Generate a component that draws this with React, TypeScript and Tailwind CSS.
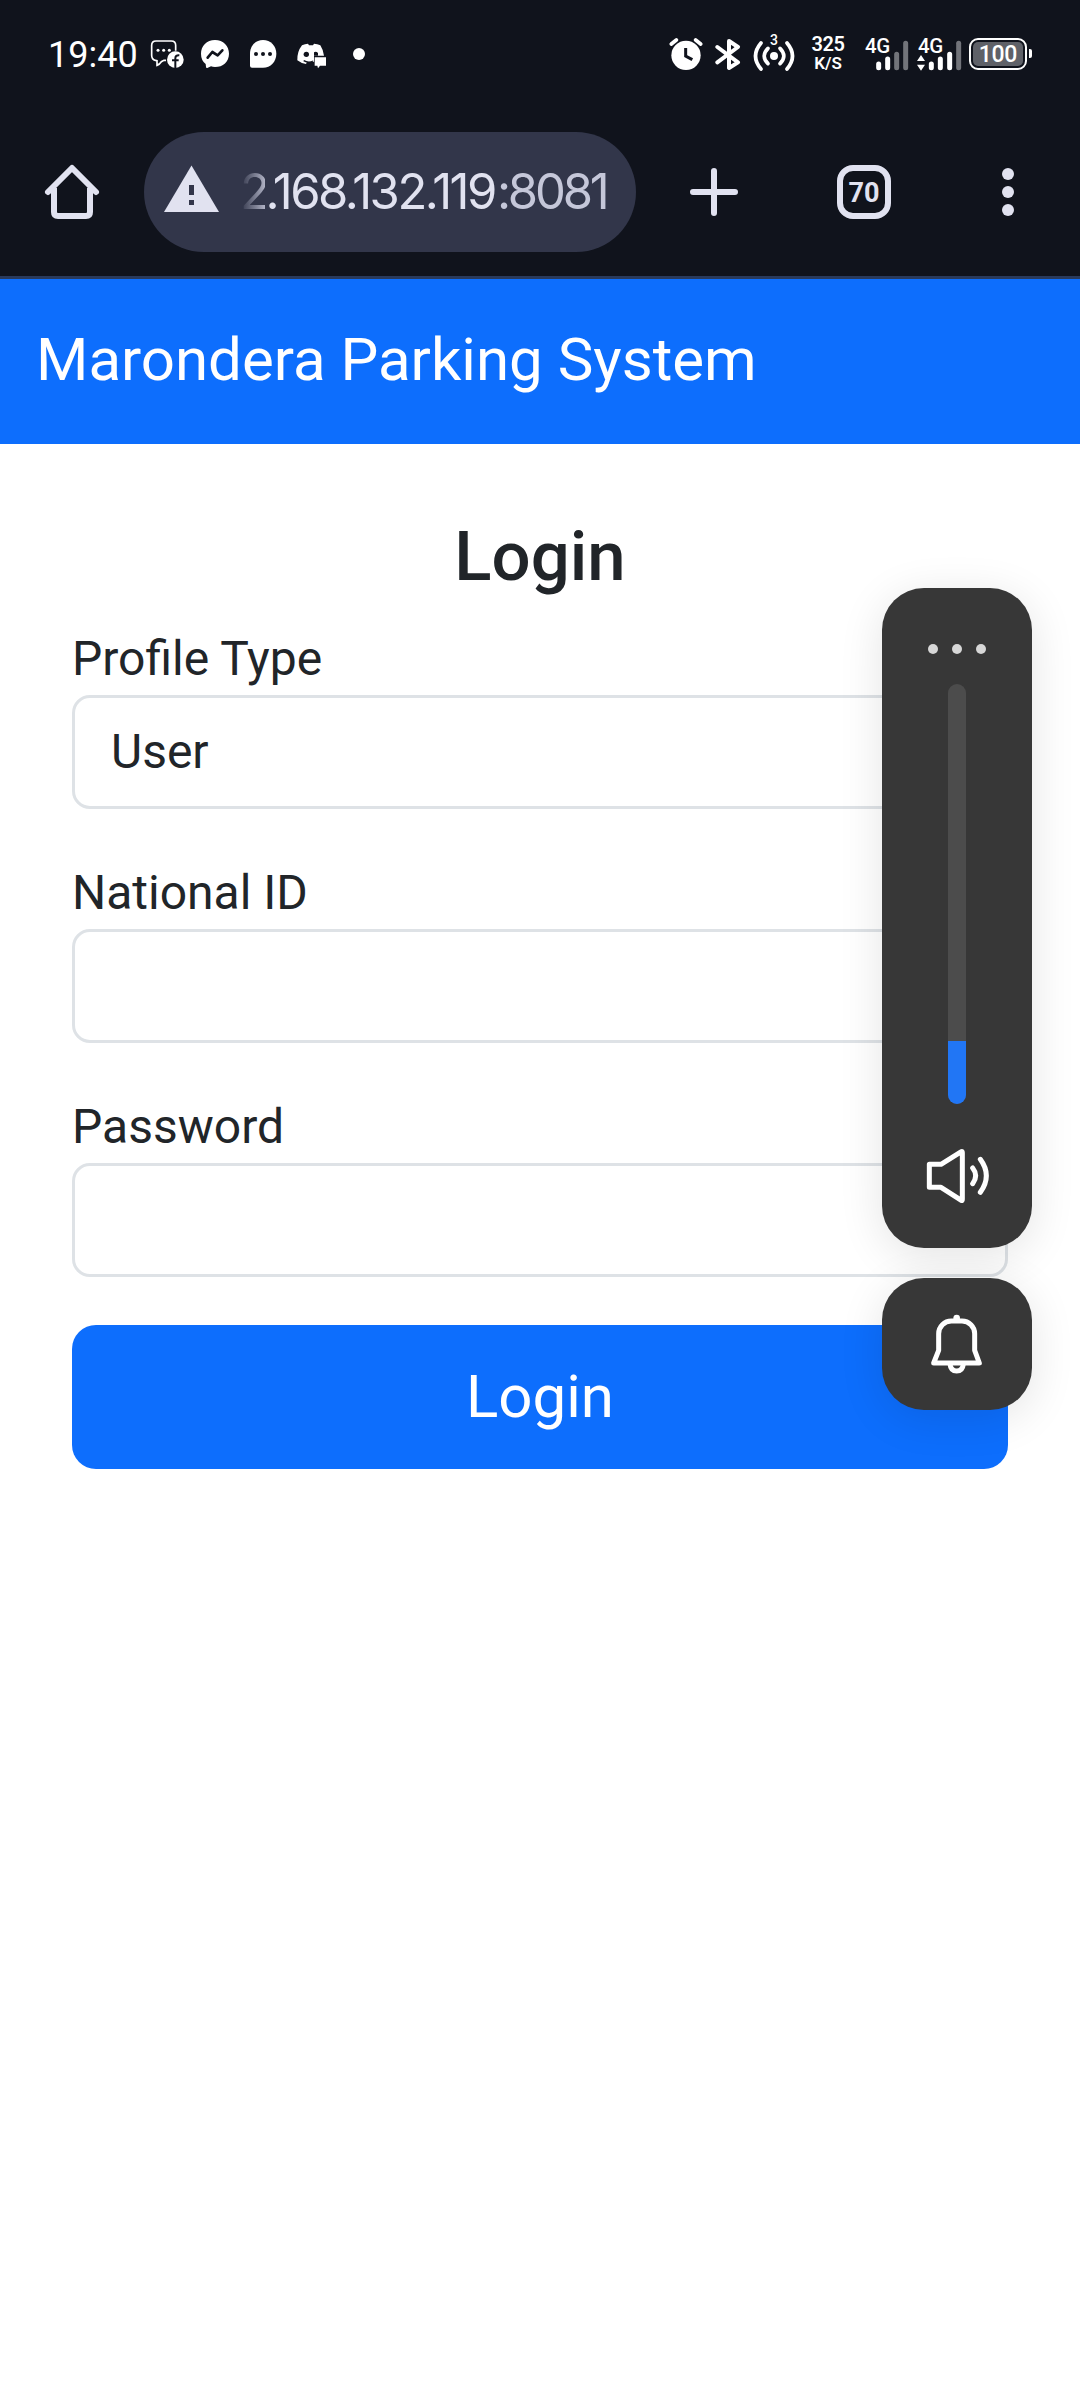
import React from "react";

const WHITE = "#ffffff";

/* Status bar glyphs are drawn on a grid of three units per pixel. */
function Glyph({ x, y, w, h, className, children }: { x: number; y: number; w: number; h: number; className?: string; children: React.ReactNode }) {
  return (
    <svg width={w / 3} height={h / 3} viewBox={`${x} ${y} ${w} ${h}`} fill="none" className={className}>
      {children}
    </svg>
  );
}

function StatusBar() {
  return (
    <div className="flex h-[108px] shrink-0 items-start pt-5 text-white">
      <span className="ml-[48px] mt-[13px] w-[90px] text-[36px] leading-[44px] whitespace-nowrap">19:40</span>
      <Glyph x={360} y={0} w={105} h={210} className="ml-[12px]">
        <path d="M437 92 V76 Q437 63 424 63 H378 Q365 63 365 76 V106 Q365 119 376 121 L381 122 V136 Q388 134 394 125 L402 121 H408" stroke={WHITE} strokeWidth="5" />
        <circle cx="384" cy="91" r="4.5" fill={WHITE} />
        <circle cx="401" cy="91" r="4.5" fill={WHITE} />
        <circle cx="418" cy="91" r="4.5" fill={WHITE} />
        <circle cx="436" cy="119" r="25" fill={WHITE} />
        <path d="M436 144 V115 Q436 105 448 106 M426 121 H446" stroke="#10131c" strokeWidth="6" />
      </Glyph>
      <Glyph x={510} y={0} w={90} h={210} className="ml-[15px]">
        <path d="M555 60 C580 60 597 78 597 101 C597 125 579 141 555 141 Q548 141 543 139 L532 144 Q528 145 528 140 L527 132 Q513 121 513 101 C513 78 530 60 555 60Z" fill={WHITE} />
        <path d="M533 113 L547 96 L563 106 L577 91" stroke="#10131c" strokeWidth="8" strokeLinecap="round" strokeLinejoin="round" />
      </Glyph>
      <Glyph x={657} y={0} w={84} h={210} className="ml-[19px]">
        <path d="M699 60 C722 60 739 78 739 101 C739 125 722 143 699 143 H666 Q660 143 660 137 V101 C660 78 676 60 699 60Z" fill={WHITE} />
        <circle cx="678" cy="102" r="6" fill="#10131c" />
        <circle cx="699" cy="102" r="6" fill="#10131c" />
        <circle cx="720" cy="102" r="6" fill="#10131c" />
      </Glyph>
      <Glyph x={801} y={0} w={90} h={210} className="ml-[20px]">
        <path d="M816 76 Q825 71 834 71 L837 76 H849 L852 71 Q862 71 871 76 Q880 90 882 107 H852 V126 H831 L828 132 Q813 130 802 121 Q801 95 816 76Z" fill={WHITE} />
        <circle cx="829" cy="103" r="8" fill="#10131c" />
        <path d="M821 122 Q836 130 850 123" stroke="#10131c" strokeWidth="4" />
        <path d="M852 107 V97 Q858 93 864 99 V107Z" fill="#10131c" />
        <path d="M854 112 H888 V137 H870 L864 145 L862 137 H854Z" fill={WHITE} />
      </Glyph>
      <Glyph x={966} y={0} w={42} h={210} className="ml-[25px]">
        <circle cx="987" cy="102" r="18" fill={WHITE} />
      </Glyph>

      <Glyph x={57} y={0} w={102} h={210} className="ml-[303px]">
        <circle cx="108" cy="106" r="44" fill={WHITE} />
        <path d="M64 72 L79 60 M152 72 L137 60" stroke={WHITE} strokeWidth="11" strokeLinecap="round" />
        <path d="M107 84 V108 L127 119" stroke="#10131c" strokeWidth="9" />
      </Glyph>
      <Glyph x={195} y={0} w={78} h={210} className="ml-[12px]">
        <path d="M202 81 L264 127 L237 144 V63 L264 81 L202 127" stroke={WHITE} strokeWidth="12" strokeLinecap="round" strokeLinejoin="round" />
      </Glyph>
      <div className="relative ml-[12px] h-[70px] w-[42px]">
        <Glyph x={309} y={0} w={126} h={210}>
          <circle cx="372" cy="108" r="12" fill={WHITE} />
          <path d="M354 85 Q331 108 354 131 M390 85 Q413 108 390 131" stroke={WHITE} strokeWidth="11" strokeLinecap="round" />
          <path d="M333 69 Q300 108 333 147 M411 69 Q444 108 411 147" stroke={WHITE} strokeWidth="11" strokeLinecap="round" />
        </Glyph>
        <span className="absolute left-[17px] top-[12px] text-[14px] font-medium leading-[16px]">3</span>
      </div>
      <div className="ml-[13px] mt-[13px] flex w-[40px] flex-col items-center font-semibold">
        <span className="text-[20px] leading-[22px] tracking-[-0.4px]">325</span>
        <span className="text-[17px] leading-[17px]">K/S</span>
      </div>
      <div className="relative ml-[17px] h-[70px] w-[46px]">
        <Glyph x={642} y={0} w={138} h={210}>
          <path d="M683 132 V143 M710 117 V143" stroke={WHITE} strokeWidth="15" strokeLinecap="round" />
          <path d="M737 103 V143 M764 70 V143" stroke="#72747a" strokeWidth="15" strokeLinecap="round" />
        </Glyph>
        <span className="absolute left-0 top-[15px] text-[20.5px] font-medium leading-[22px] tracking-[-0.5px]">4G</span>
      </div>
      <div className="relative ml-[6px] h-[70px] w-[46px]">
        <Glyph x={798} y={0} w={138} h={210}>
          <path d="M810 105 L822 123 H798Z M810 152 L822 134 H798Z" fill={WHITE} />
          <path d="M841 132 V143 M868 117 V143 M896 103 V143" stroke={WHITE} strokeWidth="15" strokeLinecap="round" />
          <path d="M923 70 V143" stroke="#72747a" strokeWidth="15" strokeLinecap="round" />
        </Glyph>
        <span className="absolute left-[1px] top-[15px] text-[20.5px] font-medium leading-[22px] tracking-[-0.5px]">4G</span>
      </div>
      <div className="ml-[6px] mt-[18px] flex h-[32px] w-[58px] rounded-[9px] border-2 border-white p-[2px]">
        <div className="flex flex-1 items-center justify-center rounded-[5px] bg-[#5f6168] text-[23px] font-medium leading-none tracking-[-0.3px]">100</div>
      </div>
      <div className="ml-[2px] mt-[29px] h-[9px] w-[3px] rounded-r-[2px] bg-white" />
    </div>
  );
}

function BrowserBar() {
  return (
    <div className="flex h-[168px] shrink-0 items-center text-[#e1e2f0]">
      <svg width="60" height="60" viewBox="42 162 60 60" fill="none" stroke="currentColor" strokeWidth="6" className="ml-[42px]">
        <path d="M48 192 L72 168 L96 192" strokeLinecap="round" strokeLinejoin="round" />
        <path d="M54 188 V212 Q54 216 58 216 H86 Q90 216 90 212 V188" />
      </svg>
      <div className="ml-[42px] flex h-[120px] w-[492px] items-center rounded-full bg-[#32364a]">
        <svg width="56" height="48" viewBox="164 165 56 48" className="ml-[20px] mt-[-6px]">
          <path d="M191.500 165.500 L219 212 H164Z" fill="currentColor" />
          <path d="M189 185 H194 V195 H189Z M189 200 H194 V205 H189Z" fill="#32364a" />
        </svg>
        <div className="ml-[20px] flex w-[380px] justify-start whitespace-nowrap font-['Inter',sans-serif] text-[49px] leading-[60px] tracking-[-2.5px]">
          <span className="bg-linear-to-r from-[#32364a] to-[#b0b2c4] bg-clip-text tracking-[-4.5px] text-transparent">2</span>
          <span>.168.132.119</span>
          <span className="ml-[2px] tracking-[-3.2px] text-[#c5c7d9]">:8081</span>
        </div>
      </div>
      <svg width="54" height="54" viewBox="0 0 54 54" stroke="currentColor" strokeWidth="6" strokeLinecap="round" className="ml-[51px]">
        <path d="M27 6 V48 M6 27 H48" />
      </svg>
      <div className="ml-[96px] flex h-[54px] w-[54px] items-center justify-center rounded-[16px] border-[6px] border-current pt-[2px] text-[27px] font-bold leading-none">70</div>
      <svg width="18" height="54" viewBox="0 0 18 54" fill="currentColor" className="ml-[108px]">
        <circle cx="9" cy="9" r="6" />
        <circle cx="9" cy="27" r="6" />
        <circle cx="9" cy="45" r="6" />
      </svg>
    </div>
  );
}

function Field({ label, value }: { label: string; value?: string }) {
  return (
    <label className="mb-[48px] block text-[48px] leading-[72px]">
      {label}
      <span className="flex h-[114px] items-center rounded-[18px] border-[3px] border-[#dee2e6] px-[36px]">{value}</span>
    </label>
  );
}

function VolumeOverlay() {
  return (
    <aside className="absolute left-[882px] top-[588px] flex w-[150px] flex-col gap-[30px]">
      <div className="flex h-[660px] flex-col items-center rounded-[42px] bg-[#373737] pt-[56px] shadow-[0_8px_45px_rgba(0,0,0,0.11)]">
        <div className="flex gap-[14px]">
          <i className="size-[10px] rounded-full bg-[#d7d7d7]" />
          <i className="size-[10px] rounded-full bg-[#d7d7d7]" />
          <i className="size-[10px] rounded-full bg-[#d7d7d7]" />
        </div>
        <div className="mt-[30px] flex h-[420px] w-[18px] flex-col justify-end overflow-hidden rounded-full bg-[#4c4c4c]">
          <div className="h-[63px] bg-[#2176f5]" />
        </div>
        <svg width="66" height="60" viewBox="192 498 198 180" fill="none" stroke={WHITE} strokeWidth="15" strokeLinejoin="round" strokeLinecap="round" className="mt-[42px]">
          <path d="M208 553 H243 L304 515 Q307 513 307 518 V658 Q307 663 304 661 L243 622 H208Z" />
          <path d="M338 564 Q356 587 338 611 M361 538 Q397 587 361 637" />
        </svg>
      </div>
      <div className="flex h-[132px] justify-center rounded-[42px] bg-[#373737] shadow-[0_8px_45px_rgba(0,0,0,0.11)]">
        <svg width="60" height="66" viewBox="201 991 180 198" fill="none" stroke={WHITE} strokeWidth="15" strokeLinejoin="round" className="mt-[33px]">
          <path d="M236 1109 V1059 A38 38 0 0 1 274 1021 H306 A38 38 0 0 1 344 1059 V1109 L358 1147 H221Z" />
          <path d="M270 1150 Q272 1171 290 1171 Q308 1171 310 1150" />
          <circle cx="290" cy="1012" r="10" fill={WHITE} stroke="none" />
        </svg>
      </div>
    </aside>
  );
}

export default function App() {
  return (
    <div className="relative flex h-[2400px] w-[1080px] flex-col overflow-hidden bg-white font-['Roboto',sans-serif] text-[#212529]">
      <header className="h-[279px] shrink-0 border-b-[3px] border-[#293a5c] bg-[#10131c]">
        <StatusBar />
        <BrowserBar />
      </header>
      <nav className="flex h-[165px] shrink-0 items-center bg-[#0d6efd] px-[36px] pb-[4px] text-[60px] leading-[90px] text-white">
        Marondera Parking System
      </nav>
      <main className="px-[72px] pt-[71px]">
        <h1 className="mb-[25px] text-center text-[68.9px] font-medium leading-[83px]">Login</h1>
        <Field label="Profile Type" value="User" />
        <Field label="National ID" />
        <Field label="Password" />
        <button className="block h-[144px] w-full rounded-[24px] bg-[#0d6efd] text-[60px] leading-[90px] text-white">Login</button>
      </main>
      <VolumeOverlay />
    </div>
  );
}
